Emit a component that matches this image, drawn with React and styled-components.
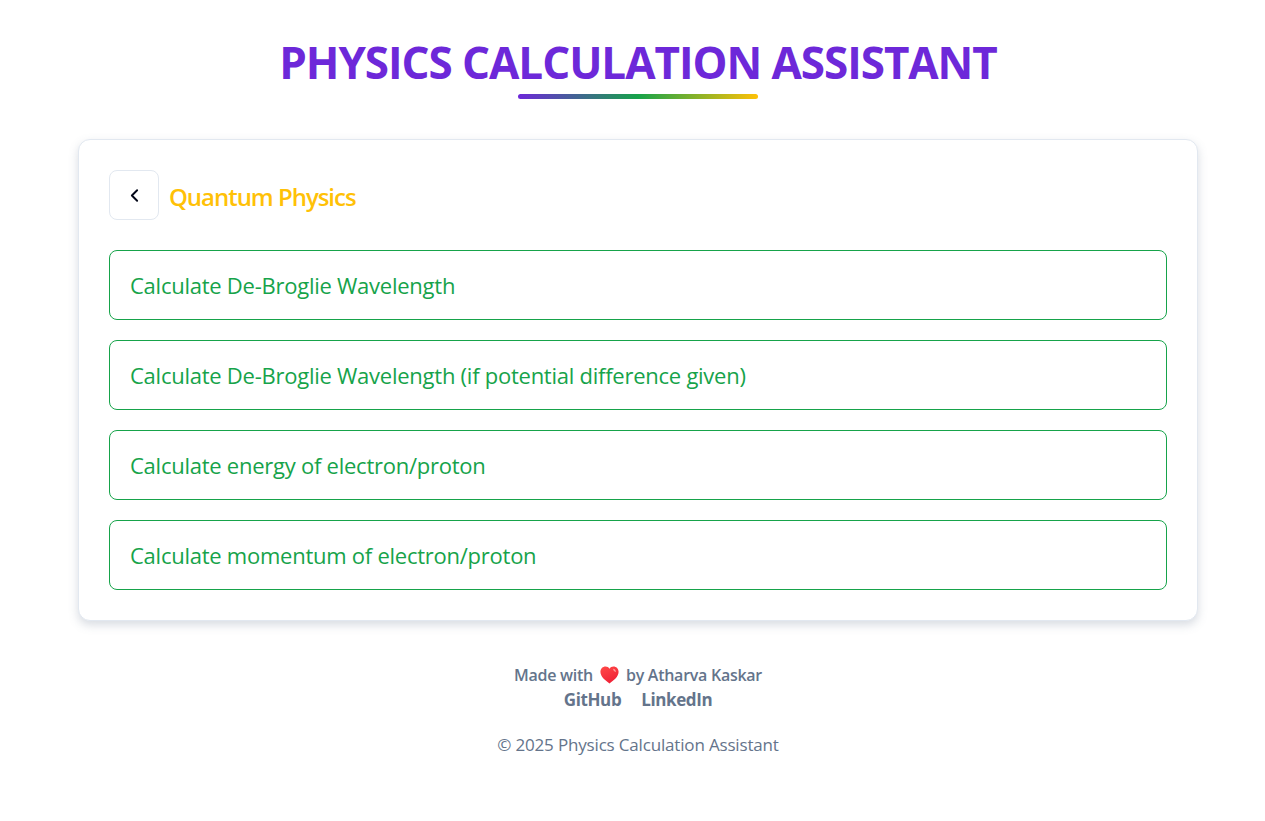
import React from 'react'
import styled, { createGlobalStyle } from 'styled-components'
import { ChevronLeft } from 'lucide-react'

const GlobalStyle = createGlobalStyle`
  * { box-sizing: border-box; }
  body {
    margin: 0;
    background: #fff;
    font-family: "Open Sans", "Noto Sans", sans-serif;
  }
`

const Page = styled.div`
  width: 1120px;
  margin-left: 78px;
  padding-top: 36px;
`

const Header = styled.header`
  display: flex;
  flex-direction: column;
  align-items: center;
  margin-bottom: 40px;
`

const Title = styled.h1`
  margin: 0;
  font-size: 44px;
  line-height: 52px;
  font-weight: 700;
  letter-spacing: -1.05px;
  color: #6d28d9;
`

const TitleBar = styled.div`
  width: 240px;
  height: 5px;
  margin-top: 6px;
  border-radius: 3px;
  background: linear-gradient(90deg, #6d28d9, #16a34a, #ffc107);
`

const Card = styled.main`
  background: #fff;
  border: 1px solid #e2e8f0;
  border-radius: 12px;
  padding: 30px;
  box-shadow: 0 4px 10px rgba(100, 116, 139, 0.25);
`

const CardHead = styled.div`
  display: flex;
  align-items: center;
  gap: 10px;
  margin-bottom: 30px;
`

const BackButton = styled.button`
  width: 50px;
  height: 50px;
  display: flex;
  align-items: center;
  justify-content: center;
  padding: 0;
  background: #fff;
  border: 1px solid #e2e8f0;
  border-radius: 8px;
  color: #0f172a;
`

const Section = styled.h2`
  margin: 2px 0 0;
  font-size: 24px;
  font-weight: 600;
  letter-spacing: -1.03px;
  color: #ffc107;
`

const List = styled.div`
  display: flex;
  flex-direction: column;
  gap: 20px;
`

const Option = styled.button`
  height: 70px;
  padding: 0 20px;
  text-align: left;
  background: #fff;
  border: 1px solid #16a34a;
  border-radius: 8px;
  color: #16a34a;
  font-family: inherit;
  font-size: 22px;
  letter-spacing: -0.25px;
`

const Footer = styled.footer`
  margin-top: 42px;
  text-align: center;
  color: #64748b;
`

const Made = styled.div`
  display: flex;
  justify-content: center;
  align-items: center;
  gap: 7px;
  font-size: 16px;
  line-height: 24px;
  font-weight: 600;
  letter-spacing: -0.27px;
`

const Heart = styled.svg`
  width: 19px;
  height: 18px;
  flex: none;
`

const Links = styled.div`
  display: flex;
  justify-content: center;
  gap: 20px;
  font-size: 17px;
  line-height: 26px;
  font-weight: 700;
  letter-spacing: -0.4px;
`

const Copy = styled.p`
  margin: 20px 0 0;
  font-size: 17px;
  line-height: 24px;
  letter-spacing: -0.17px;
`

const options = [
  'Calculate De-Broglie Wavelength',
  'Calculate De-Broglie Wavelength (if potential difference given)',
  'Calculate energy of electron/proton',
  'Calculate momentum of electron/proton',
]

const App = () => (
  <Page>
    <GlobalStyle />
    <Header>
      <Title>PHYSICS CALCULATION ASSISTANT</Title>
      <TitleBar />
    </Header>
    <Card>
      <CardHead>
        <BackButton><ChevronLeft size={21} strokeWidth={2.2} color="#020617" /></BackButton>
        <Section>Quantum Physics</Section>
      </CardHead>
      <List>
        {options.map((o) => <Option key={o}>{o}</Option>)}
      </List>
    </Card>
    <Footer>
      <Made>
        <span>Made with</span>
        <Heart viewBox="0 0 20 19">
          <defs>
            <linearGradient id="heartFill" x1="0.2" y1="0" x2="0.7" y2="1">
              <stop offset="0" stopColor="#ff4646" />
              <stop offset="1" stopColor="#ee1f35" />
            </linearGradient>
          </defs>
          <path d="M10 18.400C5.800 15.400.4 11.600.4 6.200.4 2.900 2.900.6 5.800.6c1.800 0 3.300.8 4.200 2.300C10.900 1.400 12.400.6 14.200.6c2.900 0 5.400 2.300 5.400 5.600 0 5.400-5.400 9.200-9.600 12.200z" fill="url(#heartFill)" />
          <path d="M13.800 3c1.700.2 2.900 1.500 3 3.200-1.500.1-2.800-1.300-3-3.200z" fill="#ff9c9c" />
        </Heart>
        <span>by Atharva Kaskar</span>
      </Made>
      <Links><span>GitHub</span><span>LinkedIn</span></Links>
      <Copy>© 2025 Physics Calculation Assistant</Copy>
    </Footer>
  </Page>
)

export default App
